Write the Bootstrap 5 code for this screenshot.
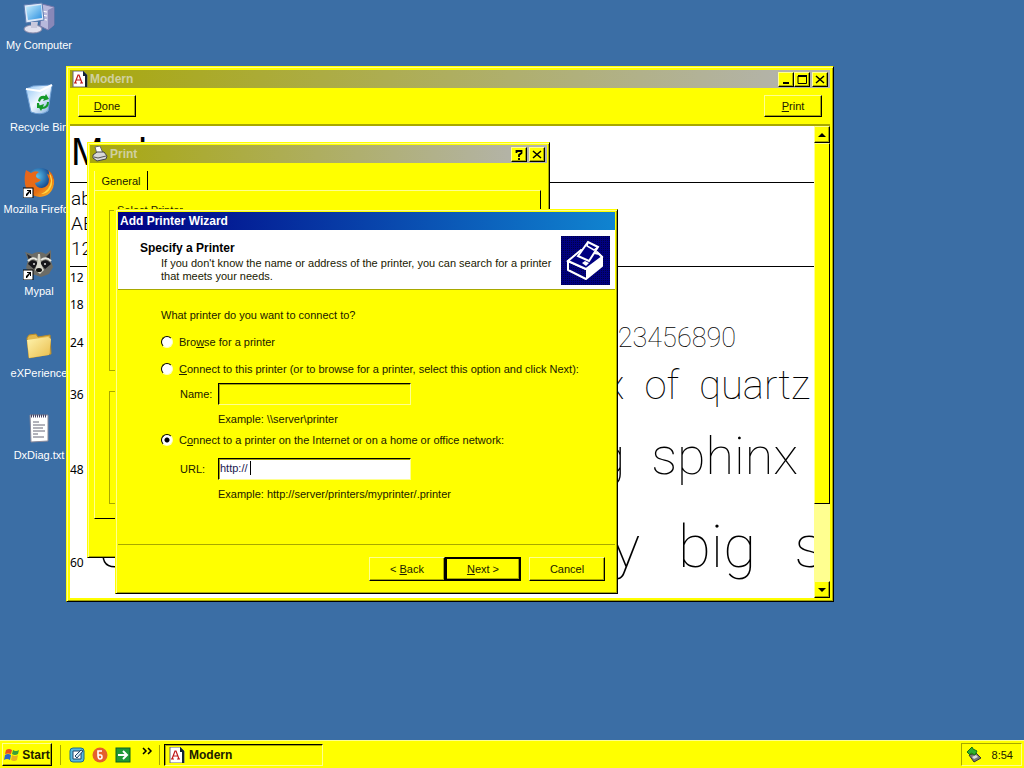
<!DOCTYPE html>
<html lang="en">
<head>
  <meta charset="UTF-8" />
  <meta name="viewport" content="width=device-width, initial-scale=1" />
  <title>Add Printer Wizard</title>
  <link href="https://cdn.jsdelivr.net/npm/bootstrap@5.3.0/dist/css/bootstrap.min.css" rel="stylesheet" />
  <style>
    :root {
      --face: #ffff00;
      --light: #ffff90;
      --shade: #a8a800;
      --ink: #202000;
    }
    body {
      background: #3b6ea5;
      font-family: "Liberation Sans", Arial, sans-serif;
      font-size: 11px;
      line-height: 14px;
      color: var(--ink);
    }
    u { text-underline-offset: 1px; }
    svg { display: block; flex: none; }

    /* desktop shortcuts */
    .shortcuts { width: 78px; padding-top: 2px; }
    .shortcut {
      height: 82px;
      color: #fff;
      text-decoration: none;
      white-space: nowrap;
    }

    /* windows */
    .win {
      position: absolute;
      background: var(--face);
      border: 1px solid;
      border-color: var(--face) #000 #000 var(--face);
      box-shadow: inset 1px 1px var(--light), inset -1px -1px var(--shade);
    }
    .win-modern { left: 66px; top: 66px; width: 768px; height: 536px; padding: 3px; }
    .win-print { left: 87px; top: 142px; width: 463px; height: 416px; padding: 2px; }
    .win-wizard { left: 115px; top: 209px; width: 503px; padding: 2px; }
    .caption {
      height: 18px;
      padding: 0 2px;
      gap: 2px;
      font-size: 12px;
      font-weight: 700;
      color: #fff;
      background: linear-gradient(90deg, #000084, #1084d0);
    }
    .caption-off { color: #d0d0a0; background: linear-gradient(90deg, #a8a80c, #b4b4b4); }

    .face-btn {
      background: var(--face);
      color: var(--ink);
      border: 1px solid;
      border-color: var(--light) #000 #000 var(--light);
      border-radius: 0;
      box-shadow: inset -1px -1px var(--shade);
      padding: 0;
    }
    .cap-btn { width: 16px; height: 15px; }
    .tool-btn { width: 58px; height: 22px; }
    .wiz-btn { width: 76px; height: 24px; }
    .wiz-btn-default { border: 2px solid #000; }

    .toolbar { height: 38px; padding: 0 8px; border-bottom: 2px solid var(--shade); }
    .sheet { background: #fff; color: #000; min-width: 0; }
    .face-name { font-size: 39px; line-height: 52px; padding-bottom: 4px; border-bottom: 1px solid #000; padding-left: 1px; }
    .charset { border-bottom: 1px solid #000; padding: 3px 0 5px 1px; }
    .charset div { font-size: 19px; line-height: 25px; font-weight: 300; }
    .stroke-text { font-family: Roboto, sans-serif; font-weight: 100; }
    .sample { font-family: "Noto Sans", sans-serif; font-size: 12px; }
    .sample-12 { line-height: 21px; }
    .sample-18 { line-height: 33px; }
    .sample-24 .stroke-text { font-size: 27px; line-height: 34px; padding-right: 78px; }
    .sample-36 .stroke-text { font-size: 40px; line-height: 61px; padding-right: 4px; gap: 20px; }
    .sample-48 .stroke-text { font-size: 52px; line-height: 81px; padding-right: 16px; gap: 26px; }
    .sample-60 .stroke-text { font-size: 60px; line-height: 99px; gap: 38px; }
    .run-off { margin-right: -10px; }

    .scroll { width: 16px; background: #ffff90; }
    .scroll-btn { height: 17px; }
    .scroll-thumb { height: 361px; border: 1px solid; border-color: var(--light) #000 #000 var(--light); background: var(--face); }

    /* print dialog */
    .tab-head { width: 54px; height: 19px; border-right: 1px solid #000; border-left: 1px solid var(--light); }
    .tab-page { border: 1px solid; border-color: var(--light) #000 #000 var(--light); margin-right: 2px; padding: 12px 14px 14px; }
    .group { border: 1px solid var(--shade); min-width: 0; }
    .group legend { font-size: 11px; line-height: 14px; margin: -8px 0 0 4px; padding: 0 3px; width: auto; background: var(--face); float: none; }
    .group-a { height: 168px; }
    .group-b { height: 113px; margin-top: 20px; }

    /* wizard */
    .wiz-head { background: #fff; height: 60px; padding: 6px 5px 4px 22px; border-bottom: 1px solid var(--shade); }
    .wiz-head h1 { font-size: 12px; line-height: 14px; font-weight: 700; margin: 5px 0 2px; color: #000; }
    .wiz-head p { line-height: 13px; width: 421px; padding-left: 21px; }
    .wiz-body { padding: 18px 12px 0 43px; height: 255px; gap: 7px; border-bottom: 1px solid var(--shade); }
    .spaced { margin-bottom: 6px; }
    .pick input {
      appearance: none;
      width: 12px;
      height: 12px;
      border-radius: 50%;
      background: #fff;
      border: 1px solid;
      border-color: #000 #ffffc0 #ffffc0 #000;
      margin: 0 6px 0 0;
    }
    .pick input:checked { background: radial-gradient(circle, #000 2px, #fff 3px); }
    .field { padding-left: 19px; }
    .field label { width: 38px; }
    .field input {
      width: 193px;
      height: 22px;
      padding: 0 1px 2px;
      border: 1px solid;
      border-color: #000 var(--light) var(--light) #000;
      box-shadow: inset 1px 1px var(--shade);
      border-radius: 0;
      font-size: 11px;
      color: #202050;
      background: #fff;
    }
    .field input:disabled { background: var(--face); }
    .hint { padding-left: 57px; }
    .caret { position: absolute; left: 32px; top: 3px; width: 1px; height: 14px; background: #000; }
    .wiz-foot { padding: 12px 10px 10px; }

    /* taskbar */
    .taskbar { height: 28px; background: var(--face); border-top: 1px solid var(--light); padding: 2px; }
    .start-btn, .task-btn { font-size: 12px; font-weight: 700; }
    .start-btn { width: 50px; height: 23px; gap: 2px; }
    .grip { width: 1px; height: 20px; background: var(--shade); }
    .launch { gap: 7px; }
    .task-btn { width: 159px; height: 22px; border-color: #000 var(--light) var(--light) #000; box-shadow: inset 1px 1px var(--shade); }
    .tray { width: 61px; height: 23px; border: 1px solid; border-color: var(--shade) var(--light) var(--light) var(--shade); }
  </style>
</head>
<body class="vh-100 d-flex flex-column overflow-hidden">

  <svg width="0" height="0" class="position-absolute">
    <defs>
      <linearGradient id="screen" x1="0" y1="0" x2="1" y2="1"><stop offset="0" stop-color="#c8f0ff" /><stop offset="1" stop-color="#2b8fe0" /></linearGradient>
      <linearGradient id="bin" x1="0" y1="0" x2="1" y2="1"><stop offset="0" stop-color="#8fc4f4" /><stop offset=".5" stop-color="#f0f8ff" /><stop offset="1" stop-color="#79a9dc" /></linearGradient>
      <linearGradient id="folder" x1="0" y1="0" x2="1" y2="1"><stop offset="0" stop-color="#fff4ae" /><stop offset="1" stop-color="#e9bd4c" /></linearGradient>
      <radialGradient id="globe" cx=".4" cy=".3"><stop offset="0" stop-color="#57c2ee" /><stop offset="1" stop-color="#123f87" /></radialGradient>
      <linearGradient id="fox" x1="0" y1="0" x2="1" y2="1"><stop offset="0" stop-color="#e8641c" /><stop offset=".6" stop-color="#e66e14" /><stop offset="1" stop-color="#ffc828" /></linearGradient>
      <pattern id="dither" width="2" height="2" patternUnits="userSpaceOnUse"><rect width="2" height="2" fill="#000080" /><rect width="1" height="1" fill="#000048" /></pattern>
      <g id="arrow-badge"><rect x="0" y="22" width="10" height="10" fill="#fff" stroke="#000" /><path d="M3 30V28L6 25H4V24H8V28H7V26L4 30Z" fill="#000" /></g>
      <g id="font-doc"><path d="M1 0H11L15 4V16H1Z" fill="#fff" stroke="#667" /><path d="M11 0L15 4V16H13V5H11Z" fill="#123" /><path d="M3 12L6 4H7L10 12M4 9H9M2 12H5M8 12H11" fill="none" stroke="#c01818" stroke-width="1.2" /></g>
    </defs>
  </svg>

  <main class="flex-grow-1 position-relative">
    <nav class="shortcuts d-flex flex-column" aria-label="Desktop">
      <a href="#" class="shortcut d-flex flex-column align-items-center gap-1">
        <svg width="32" height="32" viewBox="0 0 32 32">
          <path d="M19 2L31 5V23L25 28L17 24Z" fill="#b8b8dc" stroke="#7777aa" /><path d="M25 8L31 5V23L25 28Z" fill="#8888b8" /><path d="M19 9L24 10M19 13L24 14M19 17L24 18" stroke="#fff" />
          <path d="M1 3L19 1L21 18L3 21Z" fill="#dce8f8" stroke="#5b7bb0" /><path d="M3 5L18 3L19 16L5 18Z" fill="url(#screen)" />
          <ellipse cx="10" cy="27" rx="9" ry="4" fill="#e0e0ee" stroke="#8888a8" /><path d="M8 20H15L14 26H8Z" fill="#c8c8dc" />
        </svg>
        <span>My Computer</span>
      </a>
      <a href="#" class="shortcut d-flex flex-column align-items-center gap-1">
        <svg width="32" height="32" viewBox="0 0 32 32">
          <path d="M3 5L10 2L29 1L25 27Q18 32 8 28Z" fill="url(#bin)" stroke="#6f9fd4" /><path d="M3 5L17 7L29 1" fill="none" stroke="#fff" stroke-width="2" />
          <path d="M15 17Q16 11 22 12L23 10L26 15L20 17L21 15Q18 14 17 18ZM26 18Q26 25 19 25L18 27L15 22L21 20L20 23Q24 22 24 18ZM14 19L16 19L17 24L14 24Z" fill="#149a28" />
        </svg>
        <span>Recycle Bin</span>
      </a>
      <a href="#" class="shortcut d-flex flex-column align-items-center gap-1">
        <svg width="32" height="32" viewBox="0 0 32 32">
          <circle cx="17" cy="16" r="14" fill="url(#globe)" />
          <path d="M3 4L8 7Q12 4 16 6Q11 9 14 12L18 14Q15 17 12 17Q13 22 19 22Q26 21 26 13L24 8L27 9L25 4Q32 9 31 18Q29 30 17 31Q4 30 2 18Q1 10 3 4Z" fill="url(#fox)" />
          <path d="M26 6Q32 14 27 23Q24 28 18 28Q27 24 28 15Z" fill="#ffd844" />
          <use href="#arrow-badge" />
        </svg>
        <span>Mozilla Firefox</span>
      </a>
      <a href="#" class="shortcut d-flex flex-column align-items-center gap-1">
        <svg width="32" height="32" viewBox="0 0 32 32">
          <path d="M2 4L9 6Q16 2 23 6L28 2L28 13L30 19L26 26L18 29L9 26L3 20L5 12Z" fill="#6c6c66" /><path d="M4 6L9 9L6 12ZM27 5L23 9L27 12Z" fill="#26262a" />
          <path d="M5 16Q9 9 15 15L11 21ZM17 15Q23 9 28 16L22 21Z" fill="#16161a" /><path d="M15 6L17 6L18 16L21 22L17 26L12 22L14 16Z" fill="#d8d8ce" /><path d="M5 13Q10 8 14 12M18 12Q23 8 28 13" fill="none" stroke="#e8e8e0" stroke-width="2" />
          <circle cx="11" cy="16" r="1" fill="#ddd" /><circle cx="22" cy="16" r="1" fill="#ddd" /><ellipse cx="16" cy="22" rx="3" ry="2" fill="#111" />
          <use href="#arrow-badge" />
        </svg>
        <span>Mypal</span>
      </a>
      <a href="#" class="shortcut d-flex flex-column align-items-center gap-1">
        <svg width="32" height="32" viewBox="0 0 32 32">
          <path d="M4 8L6 5L13 4L15 7L27 5L28 24L6 28Z" fill="#e2b84c" stroke="#b58a2a" /><path d="M4 10L25 7L28 9L26 25L6 28Z" fill="url(#folder)" />
        </svg>
        <span>eXPerience</span>
      </a>
      <a href="#" class="shortcut d-flex flex-column align-items-center gap-1">
        <svg width="32" height="32" viewBox="0 0 32 32">
          <path d="M7 3H25V29L8 30Z" fill="#fff" stroke="#889" /><path d="M8 4H24" stroke="#446" stroke-width="3" stroke-dasharray="1 1" /><path d="M10 10H16M10 13H22M10 16H20M10 19H22M10 22H15M10 25H21" stroke="#667" />
        </svg>
        <span>DxDiag.txt</span>
      </a>
    </nav>

    <!-- font viewer -->
    <section class="win win-modern d-flex flex-column">
      <div class="caption caption-off d-flex align-items-center flex-shrink-0">
        <svg width="16" height="16" viewBox="0 0 16 16"><use href="#font-doc" /></svg>
        <span class="me-auto">Modern</span>
        <div class="d-flex">
          <button class="face-btn cap-btn" aria-label="Minimize"><svg width="14" height="13"><path d="M4 10H10" stroke="#000" stroke-width="2" /></svg></button>
          <button class="face-btn cap-btn" aria-label="Maximize"><svg width="14" height="13"><path d="M3 3V10.500H11.500V3" fill="none" stroke="#000" /><path d="M3 3H12" stroke="#000" stroke-width="2" /></svg></button>
        </div>
        <button class="face-btn cap-btn" aria-label="Close"><svg width="14" height="13"><path d="M3 3L11 10M11 3L3 10" stroke="#000" stroke-width="1.500" /></svg></button>
      </div>
      <div class="toolbar d-flex align-items-center justify-content-between flex-shrink-0">
        <button class="face-btn tool-btn"><u>D</u>one</button>
        <button class="face-btn tool-btn"><u>P</u>rint</button>
      </div>
      <div class="d-flex flex-grow-1 overflow-hidden">
        <div class="sheet flex-grow-1 overflow-hidden">
          <div class="face-name">Modern</div>
          <div class="charset stroke-text"><div>ab</div><div>AB</div><div>12</div></div>
          <div class="sample sample-12">12</div>
          <div class="sample sample-18">18</div>
          <div class="sample sample-24 d-flex align-items-baseline justify-content-between"><span>24</span><span class="stroke-text">23456890</span></div>
          <div class="sample sample-36 d-flex align-items-baseline justify-content-between"><span>36</span><span class="stroke-text d-flex"><span>x</span><span>of</span><span>quartz</span></span></div>
          <div class="sample sample-48 d-flex align-items-baseline justify-content-between"><span>48</span><span class="stroke-text d-flex"><span>g</span><span>sphinx</span></span></div>
          <div class="sample sample-60 d-flex align-items-baseline"><span>60</span><span class="stroke-text ms-3">J</span><span class="stroke-text run-off d-flex ms-auto"><span>y</span><span>big</span><span>s</span></span></div>
        </div>
        <div class="scroll d-flex flex-column">
          <button class="face-btn scroll-btn d-flex align-items-center justify-content-center" aria-label="Scroll up"><svg width="8" height="4"><path d="M0 4L4 0L8 4Z" /></svg></button>
          <div class="scroll-thumb"></div>
          <button class="face-btn scroll-btn d-flex align-items-center justify-content-center mt-auto" aria-label="Scroll down"><svg width="8" height="4"><path d="M0 0L4 4L8 0Z" /></svg></button>
        </div>
      </div>
    </section>

    <!-- print dialog -->
    <section class="win win-print">
      <div class="caption caption-off d-flex align-items-center">
        <svg width="16" height="16" viewBox="0 0 16 16"><path d="M3 1L8 0L11 7L5 8Z" fill="#fff" stroke="#666" /><path d="M1 9L5 6L12 6L15 10L14 13L5 15L1 12Z" fill="#d8d8d8" stroke="#444" /><path d="M2 11L6 12L14 10" stroke="#555" fill="none" /></svg>
        <span class="me-auto">Print</span>
        <button class="face-btn cap-btn" aria-label="Help"><svg width="14" height="13"><path d="M4.500 5V3H9.500V5L7 7V9M7 10V12" fill="none" stroke="#000" stroke-width="1.800" /></svg></button>
        <button class="face-btn cap-btn" aria-label="Close"><svg width="14" height="13"><path d="M3 3L11 10M11 3L3 10" stroke="#000" stroke-width="1.500" /></svg></button>
      </div>
      <div class="px-1 pt-2">
        <div class="tab-head d-flex align-items-center justify-content-center">General</div>
        <div class="tab-page d-flex flex-column">
          <fieldset class="group group-a"><legend>Select Printer</legend></fieldset>
          <fieldset class="group group-b"></fieldset>
        </div>
      </div>
    </section>

    <!-- wizard -->
    <section class="win win-wizard">
      <div class="caption d-flex align-items-center">Add Printer Wizard</div>
      <div class="wiz-head d-flex justify-content-between">
        <div>
          <h1>Specify a Printer</h1>
          <p class="mb-0">If you don't know the name or address of the printer, you can search for a printer that meets your needs.</p>
        </div>
        <svg width="49" height="49" viewBox="0 0 49 49">
          <rect width="49" height="49" fill="url(#dither)" />
          <path d="M7 25L19 16M36 16L41 21V30L25 43L7 34V25L25 33L41 21Z" fill="none" stroke="#fff" stroke-width="2" stroke-linejoin="round" />
          <path d="M25 33L41 21V30L25 43Z" fill="#fff" />
          <path d="M7 25L20 14L38 18L41 21L25 33Z" fill="#000080" stroke="#fff" stroke-width="2" />
          <path d="M17 20L27 6L37 11L28 25Z" fill="#000080" stroke="#fff" stroke-width="2" />
          <path d="M27 6L26 10L33 14L37 11" fill="none" stroke="#fff" stroke-width="1.500" />
          <path d="M21 27L24 25L28 27L25 30Z" fill="#fff" />
        </svg>
      </div>
      <form class="mb-0">
        <div class="wiz-body d-flex flex-column">
          <div class="spaced">What printer do you want to connect to?</div>
          <div class="pick spaced d-flex align-items-center">
            <input type="radio" name="target" id="browse" /><label for="browse">Bro<u>w</u>se for a printer</label>
          </div>
          <div class="pick d-flex align-items-center">
            <input type="radio" name="target" id="share" /><label for="share"><u>C</u>onnect to this printer (or to browse for a printer, select this option and click Next):</label>
          </div>
          <div class="field d-flex align-items-center"><label for="name">Name:</label><input type="text" id="name" disabled /></div>
          <div class="hint">Example: \\server\printer</div>
          <div class="pick d-flex align-items-center pb-1">
            <input type="radio" name="target" id="internet" checked /><label for="internet">C<u>o</u>nnect to a printer on the Internet or on a home or office network:</label>
          </div>
          <div class="field d-flex align-items-center"><label for="url">URL:</label><div class="position-relative"><input type="text" id="url" value="http://" /><span class="caret"></span></div></div>
          <div class="hint">Example: http://server/printers/myprinter/.printer</div>
        </div>
        <div class="wiz-foot d-flex justify-content-end">
          <button type="button" class="face-btn wiz-btn">&lt; <u>B</u>ack</button>
          <button type="button" class="face-btn wiz-btn wiz-btn-default me-2"><u>N</u>ext &gt;</button>
          <button type="button" class="face-btn wiz-btn">Cancel</button>
        </div>
      </form>
    </section>
  </main>

  <footer class="taskbar d-flex align-items-center flex-shrink-0">
    <button class="face-btn start-btn d-flex align-items-center justify-content-center">
      <svg width="16" height="16" viewBox="0 0 16 16"><path d="M2 3Q5 1 8 3L7 7Q4 6 1 7Z" fill="#e8501c" /><path d="M9 3Q12 5 15 3L14 7Q11 9 8 7Z" fill="#3aa03a" /><path d="M1 8Q4 6 7 8L6 13Q3 11 0 13Z" fill="#2c66c8" /><path d="M8 8Q11 10 14 8L13 13Q10 15 7 13Z" fill="#e8b020" /></svg>
      Start
    </button>
    <span class="grip mx-2"></span>
    <div class="launch d-flex">
      <svg width="16" height="16" viewBox="0 0 16 16"><rect x="1" y="1" width="14" height="14" rx="3" fill="#58b8dc" stroke="#1c6890" /><path d="M4 4H12V12H4Z" fill="#fff" stroke="#246" /><path d="M6 9L12 3L14 4L8 11Z" fill="#d8ecf8" stroke="#246" /></svg>
      <svg width="16" height="16" viewBox="0 0 16 16"><circle cx="8" cy="8" r="7.500" fill="#e4602c" /><path d="M10 4H6V8H9Q10 8 10 10Q10 12 8 12Q6 12 6 8" fill="none" stroke="#fff" stroke-width="1.600" /></svg>
      <svg width="16" height="16" viewBox="0 0 16 16"><rect x="1" y="1" width="14" height="14" fill="#209838" stroke="#0c6020" /><path d="M3 8H12M8 4L12 8L8 12" fill="none" stroke="#fff" stroke-width="2" /></svg>
    </div>
    <svg class="ms-2 me-1 mb-2" width="16" height="8" viewBox="0 0 16 8"><path d="M4 1L7 4L4 7M9 1L12 4L9 7" fill="none" stroke="#000" stroke-width="1.500" /></svg>
    <span class="grip me-1"></span>
    <button class="face-btn task-btn d-flex align-items-center gap-1 ps-1"><svg width="16" height="16" viewBox="0 0 16 16"><use href="#font-doc" /></svg>Modern</button>
    <div class="tray d-flex align-items-center justify-content-between ms-auto px-1">
      <svg width="16" height="16" viewBox="0 0 16 16"><path d="M3 8L10 6L15 11L8 15Z" fill="#777" stroke="#333" /><path d="M6 10L10 8L12 10L8 12Z" fill="#ddd" /><path d="M1 5L6 0L7 2L11 4L9 8L5 6L4 8Z" fill="#2fae2f" stroke="#117711" /></svg>
      <span class="me-1">8:54</span>
    </div>
  </footer>

  <script src="https://cdn.jsdelivr.net/npm/bootstrap@5.3.0/dist/js/bootstrap.bundle.min.js"></script>
</body>
</html>
